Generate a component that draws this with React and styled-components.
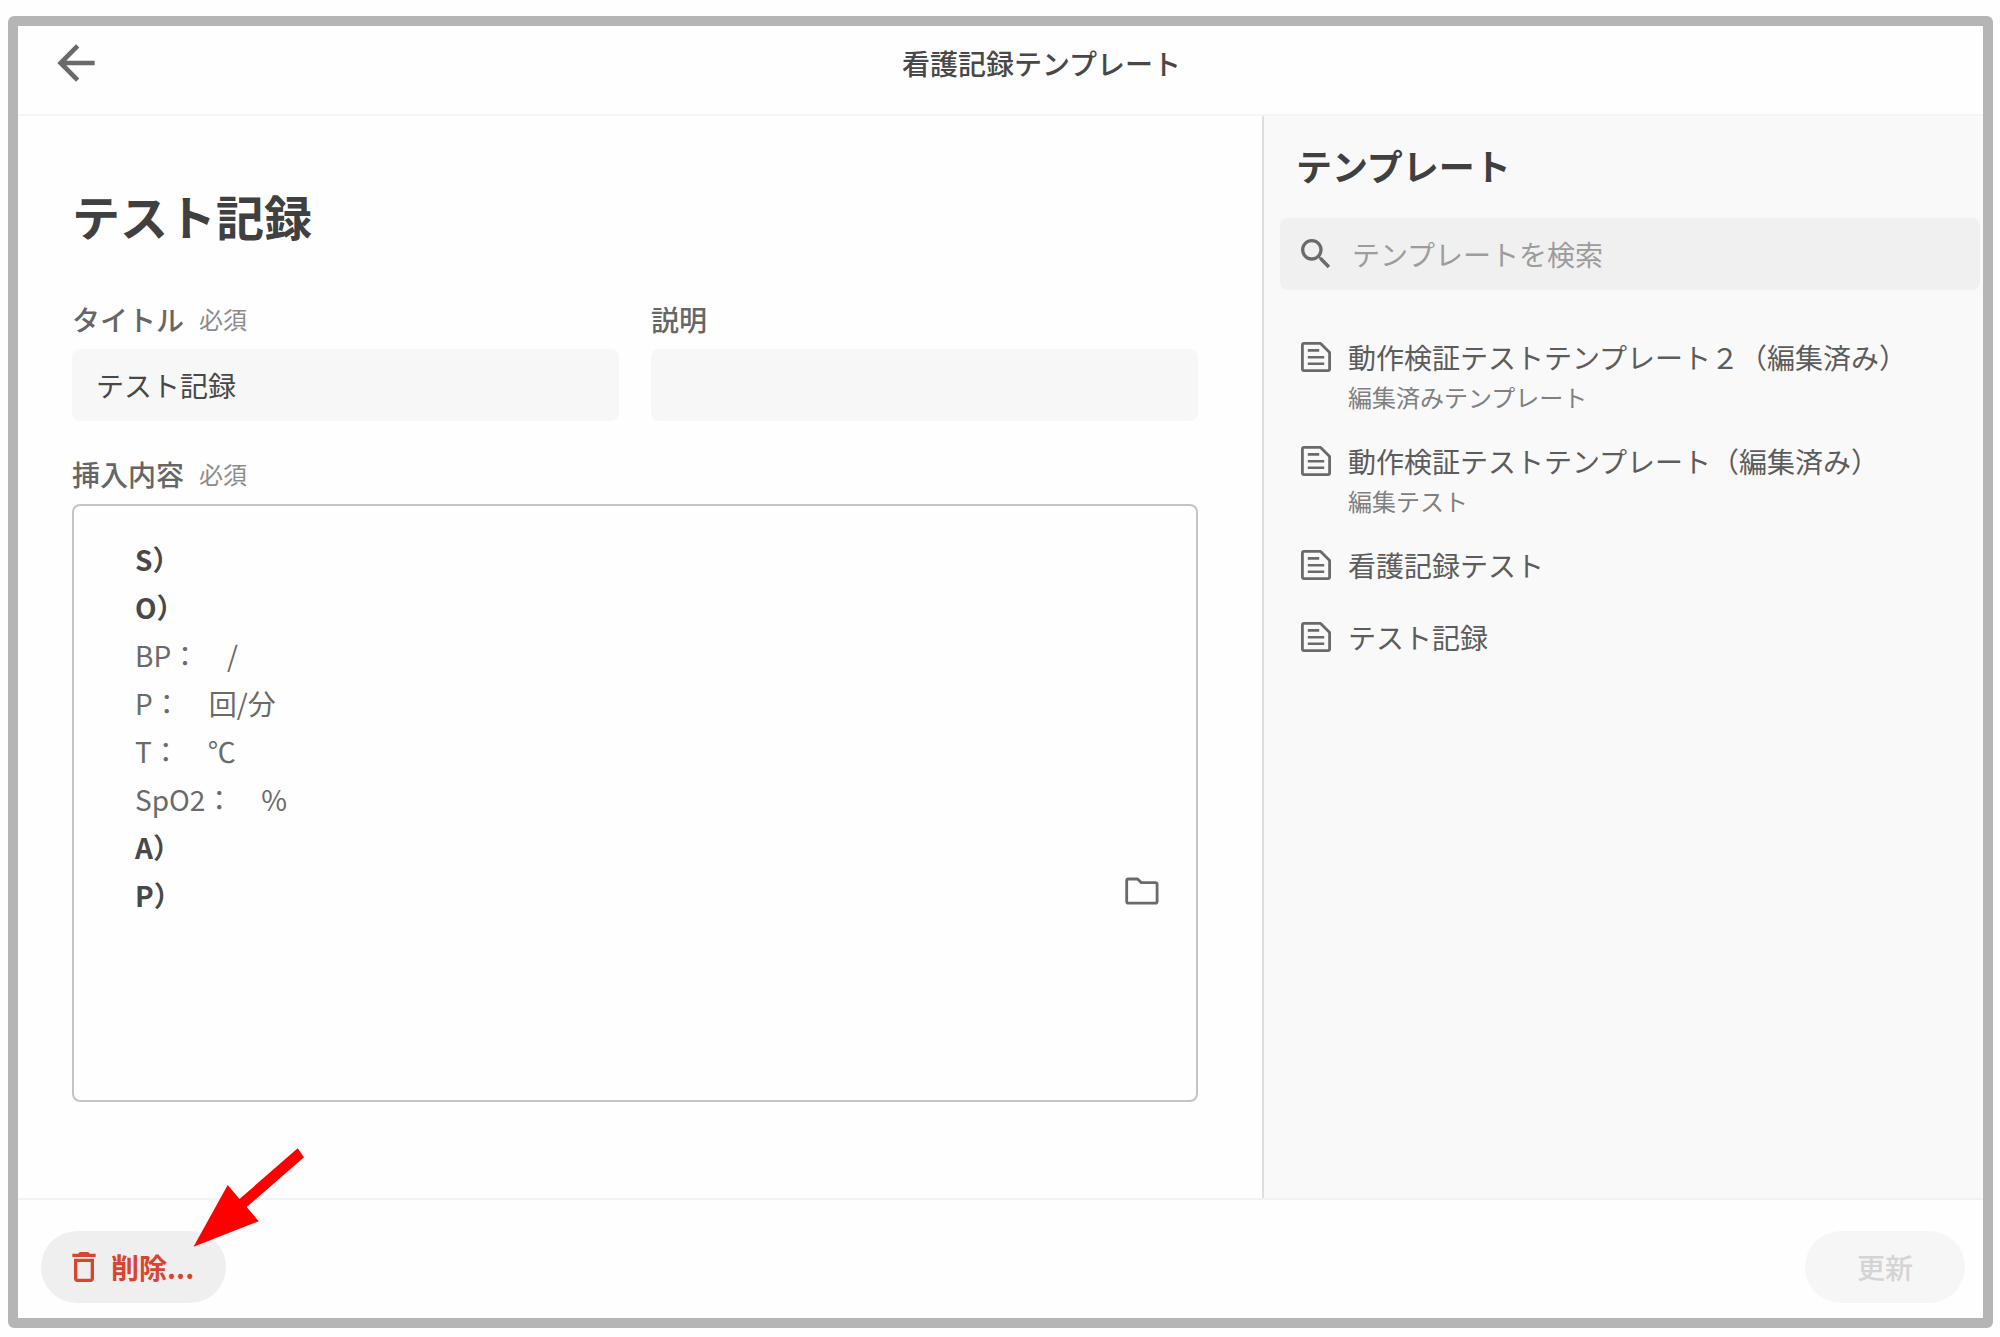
//목적: 간호기록 템플릿 편집 화면
//

import React, { useState } from 'react';
import styled, { createGlobalStyle } from 'styled-components';
import { MdArrowBack, MdDeleteOutline, MdSearch } from 'react-icons/md';

const GlobalStyle = createGlobalStyle`
  * {
    box-sizing: border-box;
  }

  body {
    margin: 0;
    background-color: #fefefe;
    color: #484848;
    font-family: 'Noto Sans CJK JP', sans-serif;
    font-size: 28px;
    line-height: 40px;
  }

  button,
  input {
    border: none;
    color: inherit;
    font: inherit;
  }

  h1,
  h2,
  p,
  ul {
    margin: 0;
    padding: 0;
  }
`;

const Page = styled.div`
  display: flex;
  min-height: 100vh;
  padding: 16px 7px 9px 8px;
`;

const Frame = styled.div`
  flex: 1;
  display: flex;
  flex-direction: column;
  min-width: 0;
  border: 10px solid #b5b5b5;
  border-radius: 6px;
`;

const Header = styled.header`
  display: flex;
  align-items: center;
  height: 90px;
  padding: 0 4px 14px 30px;
  border-bottom: 2px solid #f5f5f5;
`;

const IconButton = styled.button`
  display: flex;
  align-items: center;
  justify-content: center;
  width: 56px;
  height: 56px;
  padding: 0;
  background: none;
  color: #6a6a6a;
  cursor: pointer;
`;

const HeaderTitle = styled.p`
  flex: 1;
  text-align: center;
  font-weight: 500;
`;

const Body = styled.div`
  flex: 1;
  display: grid;
  grid-template-columns: minmax(0, 1.725fr) minmax(0, 1fr);
`;

const Main = styled.main`
  display: flex;
  flex-direction: column;
  padding: 63px 64px 96px 54px;
`;

const Title = styled.h1`
  margin-bottom: 48px;
  font-size: 48px;
  line-height: 72px;
  font-weight: 700;
  color: #404040;
`;

const FieldRow = styled.div`
  display: grid;
  grid-template-columns: 1fr 1fr;
  gap: 32px;
  margin-bottom: 33px;
`;

const Field = styled.div`
  display: flex;
  flex-direction: column;
  flex: ${({ $grow }) => ($grow ? 1 : 'none')};
  gap: 10px;
`;

const LabelRow = styled.div`
  display: flex;
  align-items: center;
  gap: 15px;
`;

const Label = styled.label`
  font-weight: 500;
  color: #666;
`;

const Required = styled.span`
  font-size: 24px;
  color: #8c8c8c;
`;

const TextInput = styled.input`
  width: 100%;
  height: 72px;
  padding: 0 24px;
  border-radius: 8px;
  background-color: #f7f7f7;
`;

const Editor = styled.div`
  flex: 1;
  display: flex;
  align-items: flex-start;
  padding: 29px 26px 29px 61px;
  border: 2px solid #c4c4c4;
  border-radius: 8px;
`;

const EditorInner = styled.div`
  flex: 1;
  display: flex;
  align-items: flex-end;
`;

const EditorText = styled.div`
  flex: 1;
  outline: none;
  line-height: 48px;
`;

const Line = styled.p`
  font-weight: ${({ $bold }) => ($bold ? 700 : 400)};
  color: ${({ $bold }) => ($bold ? '#484848' : '#6a6a6a')};
  white-space: pre-wrap;
`;

const Sidebar = styled.aside`
  padding: 21px 3px 32px 16px;
  border-left: 2px solid #dedede;
  background-color: #f9f9f9;
`;

const SidebarTitle = styled.h2`
  margin-bottom: 25px;
  padding-left: 16px;
  font-size: 36px;
  line-height: 56px;
  font-weight: 700;
  color: #404040;
`;

const SearchBox = styled.label`
  display: flex;
  align-items: center;
  gap: 16px;
  height: 72px;
  margin-bottom: 31px;
  padding: 0 16px;
  border-radius: 8px;
  background-color: #f0f0f0;
  color: #6a6a6a;
`;

const SearchInput = styled.input`
  flex: 1;
  min-width: 0;
  padding: 0;
  outline: none;
  background: none;

  &::placeholder {
    color: #9c9c9c;
    opacity: 1;
  }
`;

const TemplateList = styled.ul`
  list-style: none;
`;

const TemplateButton = styled.button`
  display: flex;
  align-items: flex-start;
  gap: 12px;
  width: 100%;
  padding: 16px;
  background: none;
  text-align: left;
  cursor: pointer;

  svg {
    flex: none;
    color: #6a6a6a;
  }
`;

const TemplateName = styled.span`
  display: block;
  color: #5c5c5c;
`;

const TemplateNote = styled.span`
  display: block;
  margin-top: 8px;
  font-size: 24px;
  line-height: 24px;
  color: #808080;
`;

const Footer = styled.footer`
  display: flex;
  justify-content: space-between;
  padding: 31px 18px 15px 23px;
  border-top: 2px solid #f2f2f2;
`;

const DeleteArea = styled.div`
  position: relative;
`;

const PillButton = styled.button`
  display: flex;
  align-items: center;
  gap: 7px;
  height: 72px;
  padding: ${({ $danger }) => ($danger ? '0 32px 0 23px' : '0 52px')};
  border-radius: 36px;
  background-color: ${({ $danger }) => ($danger ? '#efefef' : '#f6f6f6')};
  color: ${({ $danger }) => ($danger ? '#d9442f' : '#d4d4d4')};
  font-weight: ${({ $danger }) => ($danger ? 700 : 500)};
`;

const PointerArrow = styled.svg`
  position: absolute;
  left: 152px;
  top: -83px;
  pointer-events: none;
`;

const lines = [
  { text: 'S）', bold: true },
  { text: 'O）', bold: true },
  { text: 'BP：　/' },
  { text: 'P：　回/分' },
  { text: 'T：　℃' },
  { text: 'SpO2：　%' },
  { text: 'A）', bold: true },
  { text: 'P）', bold: true },
];

const templates = [
  { name: '動作検証テストテンプレート２（編集済み）', note: '編集済みテンプレート' },
  { name: '動作検証テストテンプレート（編集済み）', note: '編集テスト' },
  { name: '看護記録テスト' },
  { name: 'テスト記録' },
];

const FolderIcon = () => (
  <svg width="40" height="40" viewBox="0 0 40 40" fill="none" aria-hidden="true">
    <path
      d="M6.4 8H14.6C15.3 8 15.9 8.2 16.4 8.7L19.4 11.7H33.4C34.4 11.7 35.1 12.4 35.1 13.4V30.4C35.1 31.4 34.4 32.1 33.4 32.1H6.4C5.4 32.1 4.7 31.4 4.7 30.4V9.7C4.7 8.7 5.4 8 6.4 8Z"
      stroke="currentColor"
      strokeWidth="2.8"
      strokeLinejoin="round"
    />
  </svg>
);

const DocumentIcon = () => (
  <svg width="40" height="40" viewBox="0 0 40 40" fill="none" aria-hidden="true">
    <path
      d="M8 6.4H24.6L33.6 15.4V32C33.6 33 33 33.6 32 33.6H8C7 33.6 6.4 33 6.4 32V8C6.4 7 7 6.4 8 6.4Z"
      stroke="currentColor"
      strokeWidth="2.8"
      strokeLinejoin="round"
    />
    <path
      d="M11.8 13.4H23.2M11.8 20.2H28.2M11.8 26.8H28.2"
      stroke="currentColor"
      strokeWidth="2.6"
    />
  </svg>
);

const App = () => {
  const [title, setTitle] = useState('テスト記録');
  const [description, setDescription] = useState('');
  const [keyword, setKeyword] = useState('');

  return (
    <Page>
      <GlobalStyle />
      <Frame>
        <Header>
          <IconButton type="button" aria-label="戻る">
            <MdArrowBack size={56} />
          </IconButton>
          <HeaderTitle>看護記録テンプレート</HeaderTitle>
        </Header>

        <Body>
          <Main>
            <Title>テスト記録</Title>
            <FieldRow>
              <Field>
                <LabelRow>
                  <Label htmlFor="title">タイトル</Label>
                  <Required>必須</Required>
                </LabelRow>
                <TextInput id="title" value={title} onChange={(e) => setTitle(e.target.value)} />
              </Field>
              <Field>
                <LabelRow>
                  <Label htmlFor="description">説明</Label>
                </LabelRow>
                <TextInput
                  id="description"
                  value={description}
                  onChange={(e) => setDescription(e.target.value)}
                />
              </Field>
            </FieldRow>
            <Field $grow>
              <LabelRow>
                <Label as="span" id="content-label">挿入内容</Label>
                <Required>必須</Required>
              </LabelRow>
              <Editor>
                <EditorInner>
                  <EditorText
                    role="textbox"
                    aria-multiline="true"
                    aria-labelledby="content-label"
                    contentEditable
                    suppressContentEditableWarning
                  >
                    {lines.map((line) => (
                      <Line key={line.text} $bold={line.bold}>{line.text}</Line>
                    ))}
                  </EditorText>
                  <IconButton type="button" aria-label="テンプレートを開く">
                    <FolderIcon />
                  </IconButton>
                </EditorInner>
              </Editor>
            </Field>
          </Main>

          <Sidebar>
            <SidebarTitle>テンプレート</SidebarTitle>
            <SearchBox>
              <MdSearch size={40} />
              <SearchInput
                type="text"
                aria-label="テンプレートを検索"
                placeholder="テンプレートを検索"
                value={keyword}
                onChange={(e) => setKeyword(e.target.value)}
              />
            </SearchBox>
            <TemplateList>
              {templates
                .filter((template) => template.name.includes(keyword))
                .map((template) => (
                  <li key={template.name}>
                    <TemplateButton type="button">
                      <DocumentIcon />
                      <span>
                        <TemplateName>{template.name}</TemplateName>
                        {template.note && <TemplateNote>{template.note}</TemplateNote>}
                      </span>
                    </TemplateButton>
                  </li>
                ))}
            </TemplateList>
          </Sidebar>
        </Body>

        <Footer>
          <DeleteArea>
            <PillButton type="button" $danger>
              <MdDeleteOutline size={40} />
              削除...
            </PillButton>
            <PointerArrow width="112" height="100" viewBox="0 0 112 100" aria-hidden="true">
              <path
                d="M0.5 98.7L34.7 37L46.5 51L104.7 0.3L111 9.3L53.7 59L65.7 73.3Z"
                fill="#ff0000"
              />
            </PointerArrow>
          </DeleteArea>
          <PillButton type="button" disabled>更新</PillButton>
        </Footer>
      </Frame>
    </Page>
  );
};

export default App;
